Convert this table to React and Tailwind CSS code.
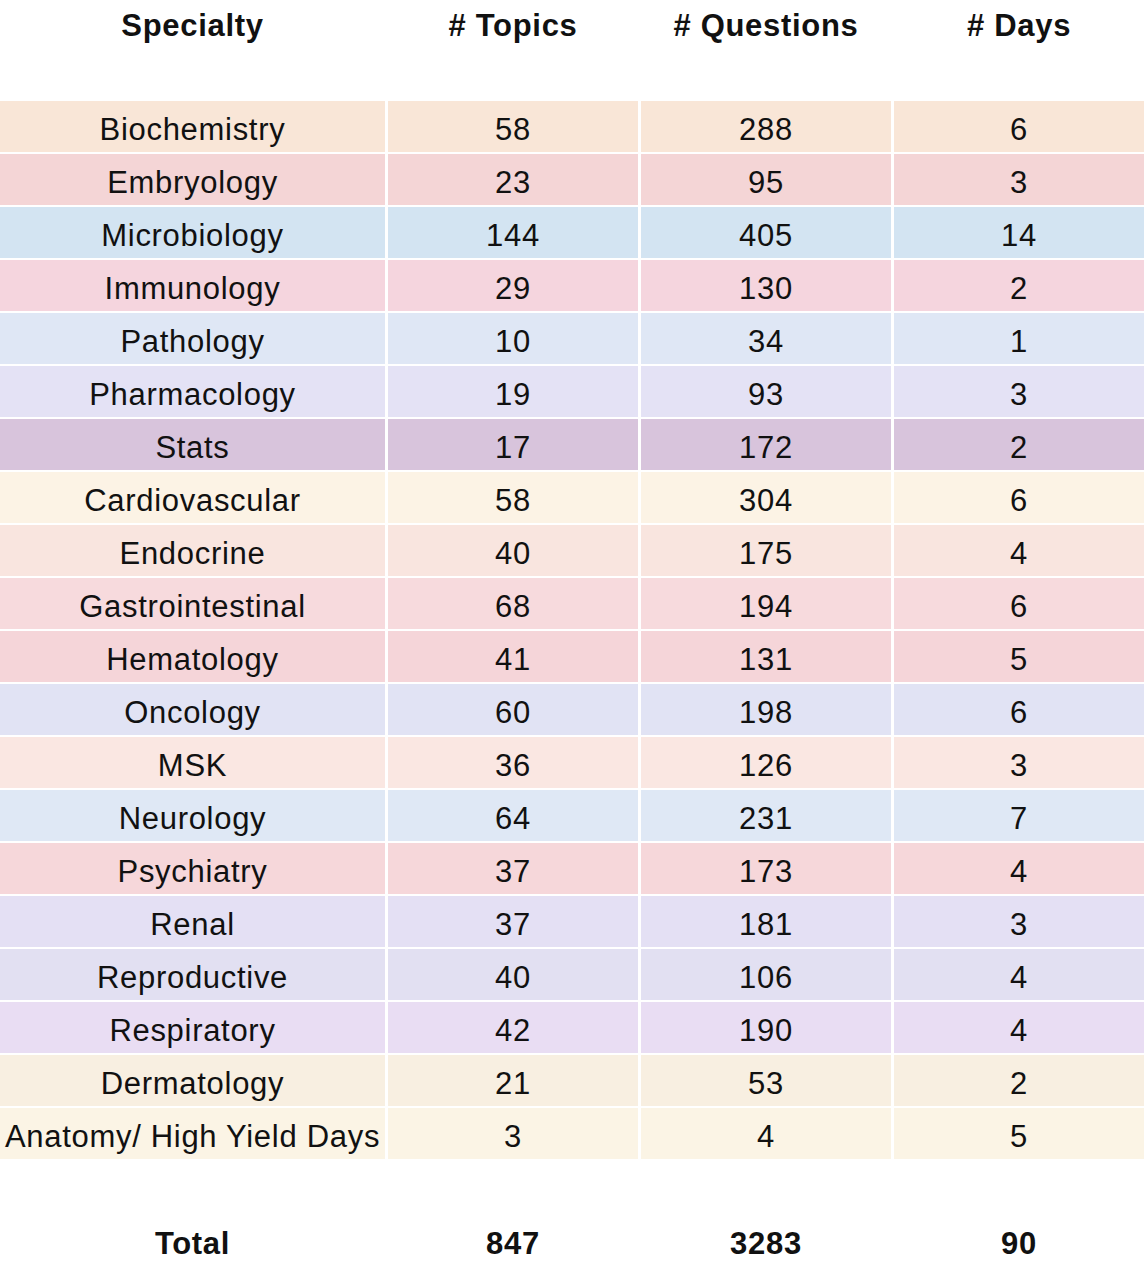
const rows = [
  ["Biochemistry", 58, 288, 6, "bg-[#f9e6d7]"],
  ["Embryology", 23, 95, 3, "bg-[#f4d5d6]"],
  ["Microbiology", 144, 405, 14, "bg-[#d3e4f2]"],
  ["Immunology", 29, 130, 2, "bg-[#f5d5de]"],
  ["Pathology", 10, 34, 1, "bg-[#dfe7f5]"],
  ["Pharmacology", 19, 93, 3, "bg-[#e4e2f5]"],
  ["Stats", 17, 172, 2, "bg-[#d8c4dc]"],
  ["Cardiovascular", 58, 304, 6, "bg-[#fcf3e5]"],
  ["Endocrine", 40, 175, 4, "bg-[#f9e5df]"],
  ["Gastrointestinal", 68, 194, 6, "bg-[#f7dadd]"],
  ["Hematology", 41, 131, 5, "bg-[#f5d5d9]"],
  ["Oncology", 60, 198, 6, "bg-[#e1e3f4]"],
  ["MSK", 36, 126, 3, "bg-[#fae7e2]"],
  ["Neurology", 64, 231, 7, "bg-[#dfe8f5]"],
  ["Psychiatry", 37, 173, 4, "bg-[#f6d7da]"],
  ["Renal", 37, 181, 3, "bg-[#e4e0f4]"],
  ["Reproductive", 40, 106, 4, "bg-[#e2e0f2]"],
  ["Respiratory", 42, 190, 4, "bg-[#e9ddf3]"],
  ["Dermatology", 21, 53, 2, "bg-[#f8efe1]"],
  ["Anatomy/ High Yield Days", 3, 4, 5, "bg-[#fbf4e5]"],
];

const cols = "grid grid-cols-[385px_250px_250px_250px] gap-x-[3px]";

export default function App() {
  return (
    <div className="w-[1144px] h-[1266px] bg-white text-[#111] font-['Liberation_Sans',Arial,sans-serif] text-[31px] tracking-[0.7px] leading-none overflow-hidden">
      {/* header */}
      <div className={`${cols} h-[50px] items-center font-bold text-center`}>
        <div>Specialty</div>
        <div># Topics</div>
        <div># Questions</div>
        <div># Days</div>
      </div>

      <div className="mt-[51px] flex flex-col gap-y-[2px]">
        {rows.map(([name, t, q, d, bg]) => (
          <div key={name} className={`${cols} h-[51px] text-center`}>
            <div className={`${bg} flex items-center justify-center pt-[6px] whitespace-nowrap`}>{name}</div>
            <div className={`${bg} flex items-center justify-center pt-[6px]`}>{t}</div>
            <div className={`${bg} flex items-center justify-center pt-[6px]`}>{q}</div>
            <div className={`${bg} flex items-center justify-center pt-[6px]`}>{d}</div>
          </div>
        ))}
      </div>

      {/* total */}
      <div className={`${cols} mt-[59px] h-[50px] items-center font-bold text-center`}>
        <div>Total</div>
        <div>847</div>
        <div>3283</div>
        <div>90</div>
      </div>
    </div>
  );
}
